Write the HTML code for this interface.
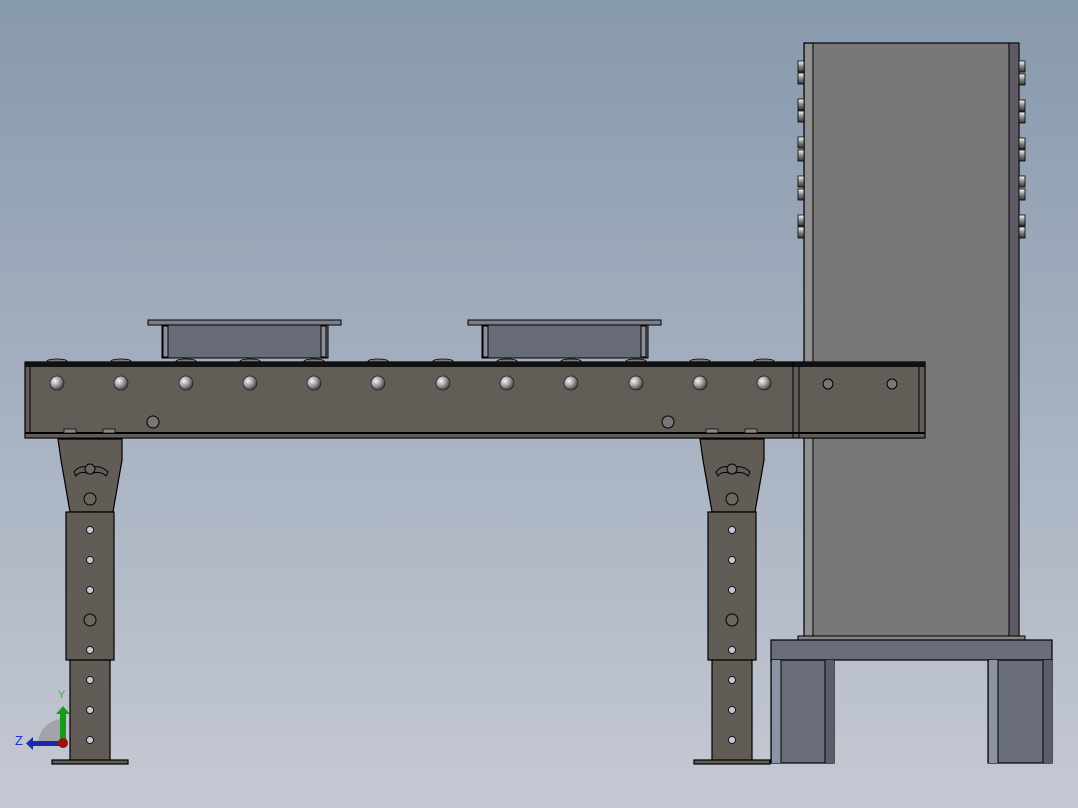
<!DOCTYPE html>
<html><head><style>html,body{margin:0;padding:0;width:1078px;height:808px;overflow:hidden}</style></head>
<body>
<svg width="1078" height="808" viewBox="0 0 1078 808" xmlns="http://www.w3.org/2000/svg" font-family="Liberation Sans, sans-serif">
<defs>
<linearGradient id="bg" x1="0" y1="0" x2="0" y2="1"><stop offset="0" stop-color="#8799ad"/><stop offset="1" stop-color="#c5c9d3"/></linearGradient>
<radialGradient id="bolt" cx="0.35" cy="0.35" r="0.7"><stop offset="0" stop-color="#f4f4f4"/><stop offset="0.5" stop-color="#a0a0a0"/><stop offset="1" stop-color="#3a3a3a"/></radialGradient>
<linearGradient id="nut" x1="0" y1="0" x2="0" y2="1"><stop offset="0" stop-color="#fff"/><stop offset="0.5" stop-color="#888"/><stop offset="1" stop-color="#333"/></linearGradient>
<g id="leg">
<path d="M0 439 H64 V460 L55 512 H12 L3 460 Z" fill="#625c57" stroke="#000" stroke-width="1.2"/>
<rect x="8" y="512" width="48" height="148" fill="#625c57" stroke="#000" stroke-width="1.2"/>
<rect x="12" y="660" width="40" height="102" fill="#625c57" stroke="#000" stroke-width="1.2"/>
<rect x="-6" y="760" width="76" height="4" fill="#625c57" stroke="#000" stroke-width="1.2"/>
<path d="M16 472 Q22 464 32 468 Q42 464 50 472 L48 476 Q42 470 32 474 Q22 470 18 476 Z" fill="#625c57" stroke="#000" stroke-width="1"/>
<circle cx="32" cy="469" r="5" fill="#6c6661" stroke="#000"/>
<circle cx="32" cy="499" r="6" fill="#6c6661" stroke="#000"/>
<g fill="#c2c8d4" stroke="#000" stroke-width="0.8">
<circle cx="32" cy="530" r="3.5"/><circle cx="32" cy="560" r="3.5"/><circle cx="32" cy="590" r="3.5"/>
<circle cx="32" cy="650" r="3.5"/><circle cx="32" cy="680" r="3.5"/><circle cx="32" cy="710" r="3.5"/><circle cx="32" cy="740" r="3.5"/></g>
<circle cx="32" cy="620" r="6" fill="#6c6661" stroke="#000"/>
</g>
</defs>
<rect width="1078" height="808" fill="url(#bg)"/>

<!-- tower -->
<rect x="804" y="43" width="215" height="595" fill="#787878" stroke="#000" stroke-width="1.2"/>
<rect x="805" y="44" width="8" height="593" fill="#909090"/>
<line x1="813" y1="43" x2="813" y2="638" stroke="#000"/>
<rect x="1009" y="44" width="9" height="593" fill="#5e5a66"/>
<line x1="1009" y1="43" x2="1009" y2="638" stroke="#000"/>
<g fill="url(#nut)" stroke="#000" stroke-width="0.8">
<rect x="798" y="61" width="6" height="11"/><rect x="798" y="73" width="6" height="11"/>
<rect x="798" y="99" width="6" height="11"/><rect x="798" y="111" width="6" height="11"/>
<rect x="798" y="137" width="6" height="11"/><rect x="798" y="150" width="6" height="11"/>
<rect x="798" y="176" width="6" height="11"/><rect x="798" y="189" width="6" height="11"/>
<rect x="798" y="215" width="6" height="11"/><rect x="798" y="227" width="6" height="11"/>
<rect x="1019" y="61" width="6" height="11"/><rect x="1019" y="74" width="6" height="11"/>
<rect x="1019" y="100" width="6" height="11"/><rect x="1019" y="112" width="6" height="11"/>
<rect x="1019" y="138" width="6" height="11"/><rect x="1019" y="150" width="6" height="11"/>
<rect x="1019" y="176" width="6" height="11"/><rect x="1019" y="189" width="6" height="11"/>
<rect x="1019" y="215" width="6" height="11"/><rect x="1019" y="227" width="6" height="11"/>
</g>
<rect x="798" y="636" width="227" height="4" fill="#858585" stroke="#000"/>
<rect x="771" y="640" width="281" height="20" fill="#6a6e7a" stroke="#000" stroke-width="1.2"/>
<rect x="771" y="660" width="63" height="103" fill="#6a6e7a" stroke="#000" stroke-width="1.2"/>
<rect x="772" y="660" width="9" height="103" fill="#8a94a4"/><line x1="781" y1="660" x2="781" y2="763" stroke="#000"/>
<rect x="825" y="660" width="9" height="103" fill="#5c5c6c"/><line x1="825" y1="660" x2="825" y2="763" stroke="#000"/>
<rect x="988" y="660" width="64" height="103" fill="#6a6e7a" stroke="#000" stroke-width="1.2"/>
<rect x="989" y="660" width="9" height="103" fill="#8a94a4"/><line x1="998" y1="660" x2="998" y2="763" stroke="#000"/>
<rect x="1043" y="660" width="9" height="103" fill="#5c5c6c"/><line x1="1043" y1="660" x2="1043" y2="763" stroke="#000"/>

<!-- trays -->
<g stroke="#000" stroke-width="1">
<rect x="148" y="320" width="193" height="5" fill="#7a7e8a"/>
<rect x="162" y="325" width="166" height="33" fill="#676b78"/>
<rect x="163" y="326" width="5" height="31" fill="#8a8e9a"/><rect x="321" y="326" width="5" height="31" fill="#8a8e9a"/>
<rect x="468" y="320" width="193" height="5" fill="#7a7e8a"/>
<rect x="482" y="325" width="166" height="33" fill="#676b78"/>
<rect x="483" y="326" width="5" height="31" fill="#8a8e9a"/><rect x="641" y="326" width="5" height="31" fill="#8a8e9a"/>
</g>
<!-- roller tops -->
<g fill="#7a7a7a" stroke="#000" stroke-width="0.8">
<ellipse cx="57" cy="361" rx="10" ry="2"/><ellipse cx="121" cy="361" rx="10" ry="2"/><ellipse cx="186" cy="361" rx="10" ry="2"/><ellipse cx="250" cy="361" rx="10" ry="2"/><ellipse cx="314" cy="361" rx="10" ry="2"/><ellipse cx="378" cy="361" rx="10" ry="2"/><ellipse cx="443" cy="361" rx="10" ry="2"/><ellipse cx="507" cy="361" rx="10" ry="2"/><ellipse cx="571" cy="361" rx="10" ry="2"/><ellipse cx="636" cy="361" rx="10" ry="2"/><ellipse cx="700" cy="361" rx="10" ry="2"/><ellipse cx="764" cy="361" rx="10" ry="2"/></g>

<!-- beam -->
<rect x="25" y="362" width="900" height="76" fill="#635d58" stroke="#000" stroke-width="1.2"/>
<rect x="25" y="362" width="900" height="5" fill="#111"/>
<rect x="25" y="433" width="900" height="5" fill="#625c57" stroke="#000"/>
<line x1="25" y1="433" x2="925" y2="433" stroke="#000" stroke-width="2"/>
<line x1="30" y1="367" x2="30" y2="433" stroke="#000"/>
<line x1="793" y1="362" x2="793" y2="438" stroke="#000"/>
<line x1="799" y1="367" x2="799" y2="438" stroke="#000"/>
<line x1="919" y1="367" x2="919" y2="433" stroke="#000"/>
<g fill="url(#bolt)" stroke="#222" stroke-width="0.8">
<circle cx="57" cy="383" r="7"/><circle cx="121" cy="383" r="7"/><circle cx="186" cy="383" r="7"/><circle cx="250" cy="383" r="7"/><circle cx="314" cy="383" r="7"/><circle cx="378" cy="383" r="7"/><circle cx="443" cy="383" r="7"/><circle cx="507" cy="383" r="7"/><circle cx="571" cy="383" r="7"/><circle cx="636" cy="383" r="7"/><circle cx="700" cy="383" r="7"/><circle cx="764" cy="383" r="7"/></g>
<g fill="#777" stroke="#000" stroke-width="1">
<circle cx="153" cy="422" r="6"/><circle cx="668" cy="422" r="6"/><circle cx="828" cy="384" r="5"/><circle cx="892" cy="384" r="5"/></g>
<g fill="#888" stroke="#000" stroke-width="0.7">
<rect x="64" y="429" width="12" height="4"/><rect x="103" y="429" width="12" height="4"/>
<rect x="706" y="429" width="12" height="4"/><rect x="745" y="429" width="12" height="4"/></g>

<use href="#leg" transform="translate(58,0)"/>
<use href="#leg" transform="translate(700,0)"/>

<!-- triad -->
<path d="M38 744 A25 25 0 0 1 63 719 V744 Z" fill="#8e8e8e" opacity="0.6"/>
<rect x="60" y="713" width="6" height="30" fill="#1a9a1a"/>
<path d="M56 714 L63 706 L70 714 Z" fill="#1a9a1a"/>
<rect x="32" y="741" width="28" height="5" fill="#1a2aaa"/>
<path d="M33 737 L26 743.5 L33 750 Z" fill="#1a2aaa"/>
<circle cx="63" cy="743" r="5" fill="#9a1010"/>
<text x="58" y="698" font-size="11" fill="#20c020">Y</text>
<text x="15" y="745" font-size="13" fill="#2030d0">Z</text>
</svg>
</body></html>
